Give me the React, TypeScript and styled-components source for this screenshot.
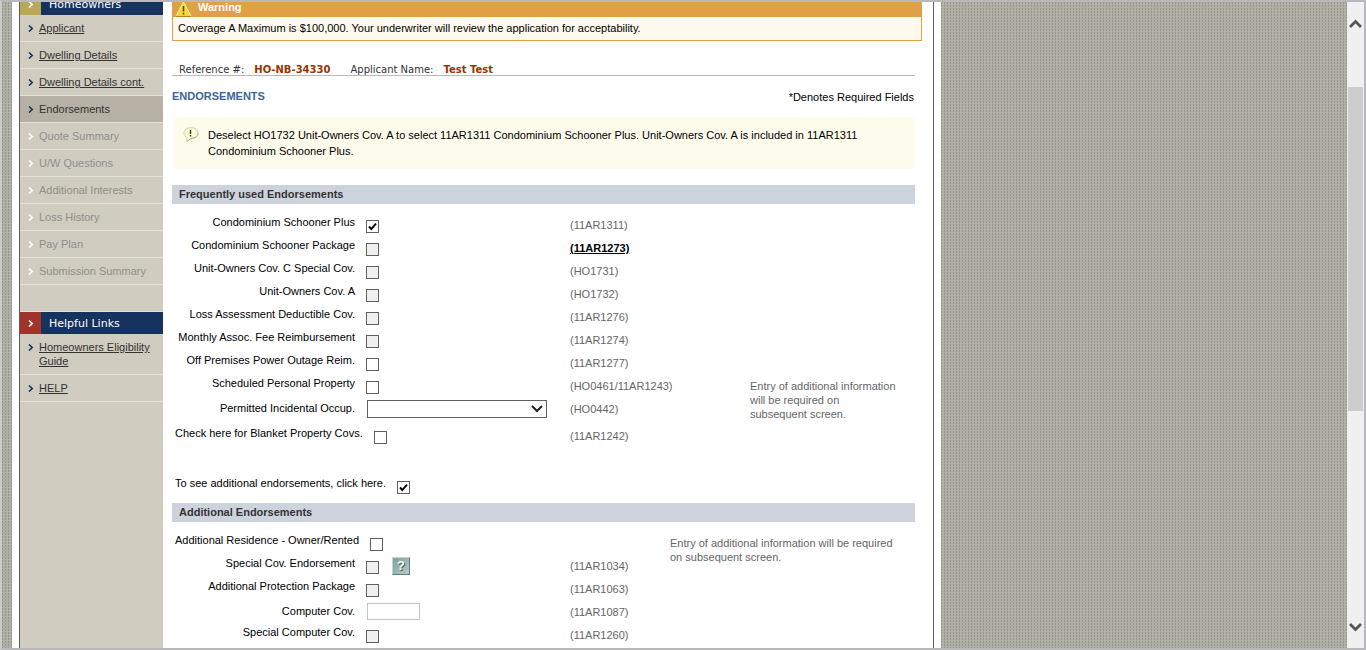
import React, { useState } from "react";
import styled, { createGlobalStyle } from "styled-components";

const GlobalStyle = createGlobalStyle`
  * { box-sizing: border-box; }
  body {
    margin: 0;
    font: 11px/14px "Liberation Sans", Arial, sans-serif;
    color: #000;
  }
`;

const Frame = styled.div`
  height: 100vh;
  display: flex;
  overflow: hidden;
  border: 2px solid #b9b9bb;
  border-left-color: #cbcbcb;
`;

const Viewport = styled.div`
  flex: 1;
  min-width: 0;
  display: flex;
  overflow: hidden;
  padding-left: 10px;
  background-color: #b0b0a6;
  background-image: conic-gradient(from 0deg at 1px 2px, transparent 0 270deg, #94958b 270deg 360deg);
  background-size: 3px 3px;
`;

const Page = styled.div`
  flex: 0 1 929px;
  padding: 0 7px;
  background: #fff;
`;

const Scrolled = styled.div`
  display: flex;
  min-height: calc(100% + 9px);
  margin-top: -9px;
  border: solid #5c5c5c;
  border-width: 0 1px;
`;

const Sidebar = styled.nav`
  flex: 0 0 143px;
  background: #d0ccc0;
`;

const MenuTitle = styled.h2<{ $accent: string }>`
  display: flex;
  align-items: flex-end;
  gap: 8px;
  height: 22px;
  margin: 0;
  background: #16325f;
  color: #fff;
  font: 11px/20px "DejaVu Sans", Verdana, sans-serif;

  > span {
    display: flex;
    align-items: center;
    align-self: stretch;
    width: 21px;
    padding-left: 8px;
    background: ${(p) => p.$accent};
  }
`;

const MenuList = styled.ul`
  margin: 0;
  padding: 0;
  list-style: none;
`;

const MenuItem = styled.li<{ $state?: string }>`
  display: flex;
  gap: 5px;
  padding: 6px 0 6px 8px;
  border-bottom: 1px solid #e4e1d8;
  background: ${(p) => (p.$state === "current" ? "#b6b1a4" : "transparent")};
  color: ${(p) => (p.$state === "disabled" ? "#8f8f8b" : "#333")};

  > svg {
    flex: none;
    margin-top: 4px;
    color: ${(p) => (p.$state === "disabled" ? "#fff" : "#16325f")};
  }
  > a {
    color: #333;
  }
`;

const MenuGap = styled.div`
  height: 27px;
  border-bottom: 1px solid #e4e1d8;
`;

const Main = styled.main`
  flex: 1;
  min-width: 0;
  padding-left: 9px;
`;

const WarningBox = styled.section`
  margin-right: 11px;
  border: 1px solid #e0a046;
  background: #fffaee;
`;

const WarningTitle = styled.h2`
  display: flex;
  align-items: flex-end;
  gap: 6px;
  height: 23px;
  margin: 0;
  padding: 0 2px;
  background: #e0a046;
  color: #fff;
  font-size: 11px;
  line-height: 20px;
`;

const WarningText = styled.p`
  margin: 0;
  padding: 4px 5px 5px;
`;

const Body = styled.div`
  padding-right: 18px;
`;

const ReferenceLine = styled.dl`
  display: flex;
  margin: 24px 0 14px;
  padding-left: 7px;
  border-bottom: 1px solid #b9b9b9;
  font: 10px/10px "DejaVu Sans", Verdana, sans-serif;
  color: #333;

  dd {
    margin: 0 20px 0 10px;
    color: #993300;
    font-weight: bold;
  }
`;

const TitleLine = styled.div`
  display: flex;
  align-items: flex-start;
  justify-content: space-between;
  padding-right: 1px;

  > h1 {
    margin: 0;
    color: #3d6599;
    font-size: 11px;
    line-height: 12px;
  }
`;

const Notice = styled.div`
  display: flex;
  gap: 9px;
  margin: 13px 0 16px 1px;
  padding: 10px 24px 10px 10px;
  background: #fdfbeb;
  line-height: 16px;

  > svg {
    flex: none;
  }
  > p {
    margin: 0;
  }
`;

const SectionTitle = styled.h2`
  margin: 0 0 10px;
  padding: 0 7px;
  background: #cdd3dd;
  color: #333;
  font-size: 11px;
  line-height: 19px;
`;

const Row = styled.div<{ $wideNote?: boolean; $before?: number; $after?: number }>`
  display: grid;
  grid-template-columns: 398px ${(p) => (p.$wideNote ? "100px" : "180px")} 1fr;
  height: 23px;
  margin-top: ${(p) => p.$before ?? 0}px;
  margin-bottom: ${(p) => p.$after ?? 0}px;
`;

const Field = styled.div`
  display: flex;
  align-items: flex-start;
`;

const Label = styled.label<{ $low?: boolean }>`
  min-width: 183px;
  margin-right: 11px;
  padding: ${(p) => (p.$low ? 3 : 1)}px 0 0 3px;
  text-align: right;
  white-space: nowrap;
`;

const Check = styled.input`
  appearance: none;
  width: 13px;
  height: 13px;
  margin: 6px 0 0;
  border: 1px solid #606060;
  background: #fff;

  &:disabled {
    background: #f0f0f0;
  }
  &:checked {
    background: #fff
      url("data:image/svg+xml,%3Csvg xmlns='http://www.w3.org/2000/svg' viewBox='0 0 11 11'%3E%3Cpath d='M2 5.5 4.3 8 9 2.6' fill='none' stroke='%23000' stroke-width='1.9'/%3E%3C/svg%3E");
  }
`;

const Select = styled.select`
  appearance: none;
  width: 180px;
  height: 18px;
  margin: 2px 0 0 1px;
  border: 1px solid #606060;
  border-radius: 0;
  background: #fff
    url("data:image/svg+xml,%3Csvg xmlns='http://www.w3.org/2000/svg' width='12' height='8'%3E%3Cpath d='M1 1 6 6 11 1' fill='none' stroke='%23222' stroke-width='2'/%3E%3C/svg%3E")
    no-repeat right 3px center;
  font: inherit;
`;

const TextBox = styled.input`
  width: 53px;
  height: 17px;
  margin: 2px 0 0 1px;
  padding: 0 2px;
  border: 1px solid #c4c4c4;
  font: inherit;
`;

const HelpButton = styled.button`
  width: 18px;
  height: 18px;
  margin: 2px 0 0 13px;
  padding: 0;
  border: 1px solid;
  border-color: #c5d6d2 #58807a #58807a #c5d6d2;
  background: linear-gradient(135deg, #7fa19b, #b5cac5);
  color: #fff;
  font: bold 13px/15px "Liberation Mono", monospace;
  text-shadow: 1px 1px 0 #40635d;
`;

const Code = styled.span`
  padding-top: 4px;
  color: #666;

  > a {
    color: #000;
    font-weight: bold;
  }
`;

const Note = styled.p`
  margin: 0;
  padding: 4px 18px 0 0;
  color: #666;
`;

const ScrollBar = styled.div`
  flex: 0 0 17px;
  display: flex;
  flex-direction: column;
  padding: 0 1px;
  background: #f0f0f0;
`;

const ScrollButton = styled.button`
  flex: 0 0 43px;
  display: flex;
  align-items: center;
  justify-content: center;
  padding: 0;
  border: 0;
  background: none;
`;

const Track = styled.div<{ $size: number; $thumb?: boolean }>`
  flex: ${(p) => p.$size};
  background: ${(p) => (p.$thumb ? "#cdcdcd" : "transparent")};
`;

const Chevron = () => (
  <svg width="6" height="7" viewBox="0 0 6 7" fill="none" stroke="currentColor" strokeWidth="1.6" aria-hidden="true">
    <path d="M1 .5 4.2 3.5 1 6.5" />
  </svg>
);

const WarningIcon = () => (
  <svg width="17" height="16" viewBox="0 0 17 16" aria-hidden="true">
    <path d="M8.5 1 16 15H1z" fill="#f8d72f" stroke="#fff3b0" strokeLinejoin="round" />
    <path d="M1 15.3h15" stroke="#a9760f" />
    <path d="M8.5 5v5.4M8.5 11.8v1.7" stroke="#574010" strokeWidth="1.5" />
  </svg>
);

const NoticeIcon = () => (
  <svg width="16" height="16" viewBox="0 0 16 16" aria-hidden="true">
    <path
      d="M8 .7C4 .7 1 2.900 1 6c0 2.200 1.300 3.700 3 4.500L3.700 14.500 8 11.300c4 0 7-2.200 7-5.300S12 .7 8 .7z"
      fill="#fafad2"
      stroke="#cfd0b4"
    />
    <path d="M8 11.500c4.300 0 7.300-2.400 7.300-5.200M3.700 14.800 8 11.500" fill="none" stroke="#999a80" strokeWidth=".7" />
    <path d="M7.500 3v4M7.500 8v1.400" stroke="#333" strokeWidth="1.400" />
  </svg>
);

const Arrow = ({ d }: { d: string }) => (
  <svg width="13" height="10" viewBox="0 0 13 10" fill="none" stroke="#555" strokeWidth="2.800" aria-hidden="true">
    <path d={d} />
  </svg>
);

type Endorsement = {
  label: string;
  code?: string;
  kind?: "select" | "text";
  checked?: boolean;
  disabled?: boolean;
  link?: boolean;
  help?: boolean;
  note?: string;
  wideNote?: boolean;
  before?: number;
  after?: number;
};

const NOTE_TEXT = "Entry of additional information will be required on subsequent screen.";

const frequent: Endorsement[] = [
  { label: "Condominium Schooner Plus", code: "(11AR1311)", checked: true },
  { label: "Condominium Schooner Package", code: "(11AR1273)", disabled: true, link: true },
  { label: "Unit-Owners Cov. C Special Cov.", code: "(HO1731)", disabled: true },
  { label: "Unit-Owners Cov. A", code: "(HO1732)", disabled: true },
  { label: "Loss Assessment Deductible Cov.", code: "(11AR1276)", disabled: true },
  { label: "Monthly Assoc. Fee Reimbursement", code: "(11AR1274)", disabled: true },
  { label: "Off Premises Power Outage Reim.", code: "(11AR1277)" },
  { label: "Scheduled Personal Property", code: "(HO0461/11AR1243)", note: NOTE_TEXT },
  { label: "Permitted Incidental Occup.", code: "(HO0442)", kind: "select" },
  { label: "Check here for Blanket Property Covs.", code: "(11AR1242)", before: 4 },
  { label: "To see additional endorsements, click here.", checked: true, before: 27, after: 5 },
];

const additional: Endorsement[] = [
  { label: "Additional Residence - Owner/Rented", note: NOTE_TEXT, wideNote: true },
  { label: "Special Cov. Endorsement", code: "(11AR1034)", disabled: true, help: true },
  { label: "Additional Protection Package", code: "(11AR1063)", disabled: true },
  { label: "Computer Cov.", code: "(11AR1087)", kind: "text" },
  { label: "Special Computer Cov.", code: "(11AR1260)", disabled: true },
];

function EndorsementRow({ item, id }: { item: Endorsement; id: string }) {
  const [checked, setChecked] = useState(!!item.checked);
  return (
    <Row $wideNote={item.wideNote} $before={item.before} $after={item.after}>
      <Field>
        <Label htmlFor={id} $low={!!item.kind}>
          {item.label}
        </Label>
        {item.kind === "select" && (
          <Select id={id}>
            <option value="" />
          </Select>
        )}
        {item.kind === "text" && <TextBox id={id} type="text" />}
        {!item.kind && (
          <Check
            id={id}
            type="checkbox"
            checked={checked}
            disabled={item.disabled}
            onChange={(e) => setChecked(e.target.checked)}
          />
        )}
        {item.help && <HelpButton type="button">?</HelpButton>}
      </Field>
      <Code>{item.link ? <a href="#form">{item.code}</a> : item.code}</Code>
      {item.note && <Note>{item.note}</Note>}
    </Row>
  );
}

const steps = [
  ["Applicant", "link"],
  ["Dwelling Details", "link"],
  ["Dwelling Details cont.", "link"],
  ["Endorsements", "current"],
  ["Quote Summary", "disabled"],
  ["U/W Questions", "disabled"],
  ["Additional Interests", "disabled"],
  ["Loss History", "disabled"],
  ["Pay Plan", "disabled"],
  ["Submission Summary", "disabled"],
];

const links = [
  ["Homeowners Eligibility Guide", "link"],
  ["HELP", "link"],
];

const Menu = ({ title, accent, items }: { title: string; accent: string; items: string[][] }) => (
  <>
    <MenuTitle $accent={accent}>
      <span>
        <Chevron />
      </span>
      {title}
    </MenuTitle>
    <MenuList>
      {items.map(([text, state]) => (
        <MenuItem key={text} $state={state}>
          <Chevron />
          {state === "link" ? <a href="#step">{text}</a> : text}
        </MenuItem>
      ))}
    </MenuList>
  </>
);

export default function App() {
  return (
    <Frame>
      <GlobalStyle />
      <Viewport>
        <Page>
          <Scrolled>
            <Sidebar>
              <Menu title="Homeowners" accent="#b9a955" items={steps} />
              <MenuGap />
              <Menu title="Helpful Links" accent="#a0342b" items={links} />
            </Sidebar>
            <Main>
              <WarningBox>
                <WarningTitle>
                  <WarningIcon />
                  Warning
                </WarningTitle>
                <WarningText>
                  Coverage A Maximum is $100,000. Your underwriter will review the application for acceptability.
                </WarningText>
              </WarningBox>
              <Body>
                <ReferenceLine>
                  <dt>Reference #:</dt>
                  <dd>HO-NB-34330</dd>
                  <dt>Applicant Name:</dt>
                  <dd>Test Test</dd>
                </ReferenceLine>
                <TitleLine>
                  <h1>ENDORSEMENTS</h1>
                  <span>*Denotes Required Fields</span>
                </TitleLine>
                <Notice>
                  <NoticeIcon />
                  <p>
                    Deselect HO1732 Unit-Owners Cov. A to select 11AR1311 Condominium Schooner Plus. Unit-Owners Cov. A
                    is included in 11AR1311 Condominium Schooner Plus.
                  </p>
                </Notice>
                <SectionTitle>Frequently used Endorsements</SectionTitle>
                {frequent.map((item, i) => (
                  <EndorsementRow key={item.label} item={item} id={`frequent-${i}`} />
                ))}
                <SectionTitle>Additional Endorsements</SectionTitle>
                {additional.map((item, i) => (
                  <EndorsementRow key={item.label} item={item} id={`additional-${i}`} />
                ))}
              </Body>
            </Main>
          </Scrolled>
        </Page>
      </Viewport>
      <ScrollBar>
        <ScrollButton type="button" aria-label="Scroll up">
          <Arrow d="M1 8 6.5 2.500 12 8" />
        </ScrollButton>
        <Track $size={42} />
        <Track $size={324} $thumb />
        <Track $size={194} />
        <ScrollButton type="button" aria-label="Scroll down">
          <Arrow d="M1 2 6.5 7.500 12 2" />
        </ScrollButton>
      </ScrollBar>
    </Frame>
  );
}
